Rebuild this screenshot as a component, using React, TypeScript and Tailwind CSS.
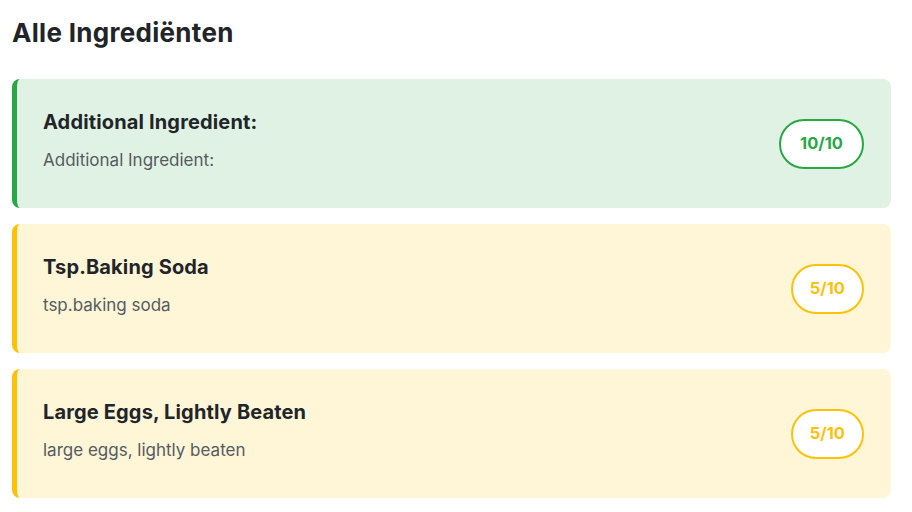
import React from "react";

const items = [
  { title: "Additional Ingredient:", sub: "Additional Ingredient:", score: "10/10", ok: true },
  { title: "Tsp.Baking Soda", sub: "tsp.baking soda", score: "5/10", ok: false },
  { title: "Large Eggs, Lightly Beaten", sub: "large eggs, lightly beaten", score: "5/10", ok: false },
];

export default function App() {
  return (
    <div className="bg-white min-h-screen px-3 pt-[17px] font-['Inter',sans-serif] text-[#212529]">
      <h2 className="text-[26px] leading-8 font-bold tracking-[0.3px]">Alle Ingrediënten</h2>
      <div className="mt-[30px] flex flex-col gap-4 w-[879px]">
        {items.map((it, i) => (
          <div
            key={i}
            className={
              "h-[129px] rounded-lg border-l-[5px] pl-[26px] pr-[27px] flex items-center justify-between " +
              (it.ok ? "bg-[#e0f2e3] border-[#28a745]" : "bg-[#fff5d7] border-[#ffc107]")
            }
          >
            <div className="flex flex-col self-start pt-[29px]">
              <div className="text-[20px] leading-7 font-bold tracking-[0.15px]">{it.title}</div>
              <div className="mt-3 text-[17px] leading-6 text-[#555b61]">{it.sub}</div>
            </div>
            <div
              className={
                "h-[50px] rounded-full border-2 bg-white flex items-center text-[16.5px] font-bold " +
                (it.ok
                  ? "border-[#28a745] text-[#28a745] px-[19px]"
                  : "border-[#ffc107] text-[#ffc107] px-[17px]")
              }
            >
              {it.score}
            </div>
          </div>
        ))}
      </div>
    </div>
  );
}
